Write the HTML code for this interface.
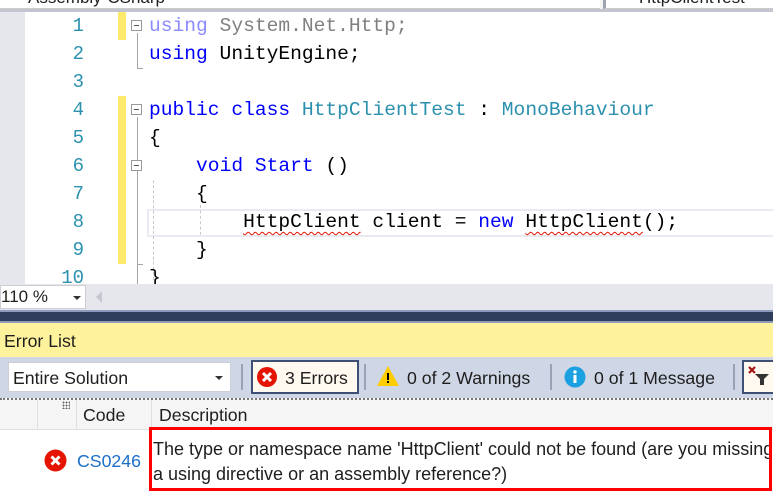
<!DOCTYPE html>
<html><head><meta charset="utf-8"><style>
*{margin:0;padding:0;box-sizing:border-box}
body{width:773px;height:491px;overflow:hidden;background:#fff;position:relative;font-family:"Liberation Sans","DejaVu Sans",sans-serif}
.a{position:absolute}
.code{font-family:"Liberation Mono","DejaVu Sans Mono",monospace;font-size:19.6px;white-space:pre;line-height:28px}
.ln{position:absolute;left:26px;width:58px;text-align:right;color:#2b91af;font-family:"Liberation Mono",monospace;font-size:19px;line-height:28px}
.kw{color:#0000ff}.ty{color:#2b91af}.gr{color:#808080}.kwg{color:#8a8aff}
.sq{text-decoration:underline wavy #e51400;text-decoration-thickness:1px;text-underline-offset:4px}
.box{position:absolute;width:11px;height:11px;border:1px solid #999;background:#fff}
.box:after{content:"";position:absolute;left:2px;top:4px;width:5px;height:1px;background:#555}
.t{font-size:17.7px;color:#1e1e1e;position:absolute}
</style></head><body>
<!-- top bar -->
<div class="a" style="left:0;top:0;width:773px;height:10px;background:#f5f5f5"></div>
<div class="a" style="left:0;top:0;width:600px;height:9px;background:#fff;border-bottom:1px solid #ccc;overflow:hidden"><div style="position:absolute;left:28px;top:-12px;font-size:17px;color:#1e1e1e">Assembly-CSharp</div></div>
<div class="a" style="left:603px;top:0;width:170px;height:9px;background:#fff;border-left:3px solid #a0a4b0;border-bottom:1px solid #ccc;overflow:hidden"><div style="position:absolute;left:33px;top:-12px;font-size:17px;color:#1e1e1e">HttpClientTest</div></div>
<div class="a" style="left:0;top:9px;width:773px;height:3px;background:#c2c5cf"></div>
<!-- editor -->
<div class="a" style="left:0;top:12px;width:25px;height:272px;background:#e6e7ed"></div>
<div class="a" style="left:118px;top:12px;width:8px;height:28px;background:#fde96b"></div>
<div class="a" style="left:118px;top:96px;width:8px;height:168px;background:#fde96b"></div>
<div class="a" style="left:147px;top:209px;width:626px;height:28px;border:2px solid #eaeaf2;border-right:none"></div>
<div class="a" style="left:137px;top:33px;width:1px;height:36px;background:#a5a5a5"></div>
<div class="a" style="left:137px;top:68px;width:6px;height:1px;background:#a5a5a5"></div>
<div class="a" style="left:137px;top:117px;width:1px;height:167px;background:#a5a5a5"></div>
<div class="a" style="left:137px;top:264px;width:6px;height:1px;background:#a5a5a5"></div>
<div class="a" style="left:153px;top:180px;width:0;height:100px;border-left:1px dashed #c8c8c8"></div>
<div class="a" style="left:200px;top:205px;width:0;height:30px;border-left:1px dashed #c8c8c8"></div>
<div class="box" style="left:131px;top:20px"></div>
<div class="box" style="left:131px;top:104px"></div>
<div class="box" style="left:131px;top:160px"></div>
<div class="ln" style="top:12px">1</div><div class="ln" style="top:40px">2</div><div class="ln" style="top:68px">3</div><div class="ln" style="top:96px">4</div><div class="ln" style="top:124px">5</div><div class="ln" style="top:152px">6</div><div class="ln" style="top:180px">7</div><div class="ln" style="top:208px">8</div><div class="ln" style="top:236px">9</div><div class="ln" style="top:264px">10</div>
<div class="a code" style="left:149px;top:12px;height:272px;overflow:hidden"><span class="kwg">using</span> <span class="gr">System.Net.Http;</span>
<span class="kw">using</span> UnityEngine;

<span class="kw">public</span> <span class="kw">class</span> <span class="ty">HttpClientTest</span> : <span class="ty">MonoBehaviour</span>
{
    <span class="kw">void</span> <span class="kw">Start</span> ()
    {
        <span class="sq">HttpClient</span> client = <span class="kw">new</span> <span class="sq">HttpClient</span>();
    }
}</div>
<!-- zoom bar -->
<div class="a" style="left:0;top:284px;width:773px;height:26px;background:#e6e7ed"></div>
<div class="a" style="left:0;top:285px;width:86px;height:24px;background:#fff;border:1px solid #ccced6"></div>
<div class="a" style="left:1px;top:287px;font-size:17px;color:#1e1e1e">110 %</div>
<div class="a" style="left:73px;top:296px;width:0;height:0;border-left:4px solid transparent;border-right:4px solid transparent;border-top:4px solid #333"></div>
<div class="a" style="left:96px;top:291px;width:0;height:0;border-top:6px solid transparent;border-bottom:6px solid transparent;border-right:6px solid #c6c8d0"></div>
<div class="a" style="left:0;top:310px;width:773px;height:13px;background:#2e3d5b;border-top:2px solid #8e9bbc;border-bottom:2px solid #8e9bbc"></div>
<div class="a" style="left:0;top:323px;width:773px;height:34px;background:#fff29d"></div>
<div class="a" style="left:4px;top:331px;font-size:17.7px;color:#1e1e1e">Error List</div>
<div class="a" style="left:0;top:357px;width:773px;height:41px;background:#cfd6e5"></div>
<div class="a" style="left:8px;top:362px;width:223px;height:30px;background:#fff;border:1px solid #ccced6"></div>
<div class="t" style="left:13px;top:368px">Entire Solution</div>
<div class="a" style="left:215px;top:376px;width:0;height:0;border-left:4px solid transparent;border-right:4px solid transparent;border-top:4px solid #333"></div>
<div class="a" style="left:241px;top:364px;width:2px;height:26px;background:#9aa3b5"></div>
<div class="a" style="left:251px;top:360px;width:108px;height:34px;background:#fff9ef;border:2px solid #3e5074"></div>
<svg class="a" style="left:256px;top:366px" width="22" height="22"><circle cx="11" cy="11" r="10" fill="#e51400"/><path d="M7 7L15 15M15 7L7 15" stroke="#fff" stroke-width="3"/></svg>
<div class="t" style="left:285px;top:368px">3 Errors</div>
<div class="a" style="left:364px;top:364px;width:2px;height:26px;background:#9aa3b5"></div>
<svg class="a" style="left:376px;top:365px" width="24" height="22"><path d="M12 1L23 21H1Z" fill="#ffcc00"/><rect x="11" y="8" width="2" height="7" fill="#000"/><rect x="11" y="16" width="2" height="2" fill="#000"/></svg>
<div class="t" style="left:407px;top:368px">0 of 2 Warnings</div>
<div class="a" style="left:550px;top:364px;width:2px;height:26px;background:#9aa3b5"></div>
<svg class="a" style="left:564px;top:366px" width="22" height="22"><circle cx="11" cy="11" r="10.5" fill="#1ba1e2"/><rect x="9.5" y="9" width="3" height="8" fill="#fff"/><circle cx="11" cy="6" r="1.7" fill="#fff"/></svg>
<div class="t" style="left:594px;top:368px">0 of 1 Message</div>
<div class="a" style="left:733px;top:364px;width:2px;height:26px;background:#9aa3b5"></div>
<div class="a" style="left:742px;top:360px;width:40px;height:34px;background:#fff9ef;border:2px solid #3e5074"></div>
<svg class="a" style="left:747px;top:365px" width="24" height="22"><path d="M2 2L8 8M8 2L2 8" stroke="#a31515" stroke-width="2.2"/><path d="M8 9H22L17 14V20H13V14Z" fill="#333"/></svg>
<div class="a" style="left:0;top:398px;width:773px;height:2px;border-top:2px dotted #777;background:#f5f5f5"></div>
<div class="a" style="left:0;top:400px;width:773px;height:30px;background:#f5f5f5;border-bottom:1px solid #e0e0e0"></div>
<div class="a" style="left:37px;top:400px;width:1px;height:30px;background:#e0e0e0"></div>
<div class="a" style="left:76px;top:400px;width:1px;height:30px;background:#e0e0e0"></div>
<div class="a" style="left:151px;top:400px;width:1px;height:30px;background:#e0e0e0"></div>
<div class="a" style="left:62px;top:401px;width:8px;height:8px;background:radial-gradient(circle,#666 0.8px,transparent 1px) 0 0/3px 3px"></div>
<div class="t" style="left:83px;top:405px">Code</div>
<div class="t" style="left:159px;top:405px">Description</div>
<svg class="a" style="left:44px;top:449px" width="23" height="23"><circle cx="11.5" cy="11.5" r="11" fill="#e51400"/><path d="M7.5 7.5L15.5 15.5M15.5 7.5L7.5 15.5" stroke="#fff" stroke-width="3"/></svg>
<div class="a" style="left:77px;top:451px;font-size:17.7px;color:#1a6fc9">CS0246</div>
<div class="a" style="left:149px;top:427px;width:623px;height:64px;border:3px solid #ff0000;overflow:hidden"><div style="position:absolute;left:1px;top:7px;font-size:18px;color:#1e1e1e;line-height:25px;white-space:nowrap">The type or namespace name 'HttpClient' could not be found (are you missing<br>a using directive or an assembly reference?)</div></div>
</body></html>
